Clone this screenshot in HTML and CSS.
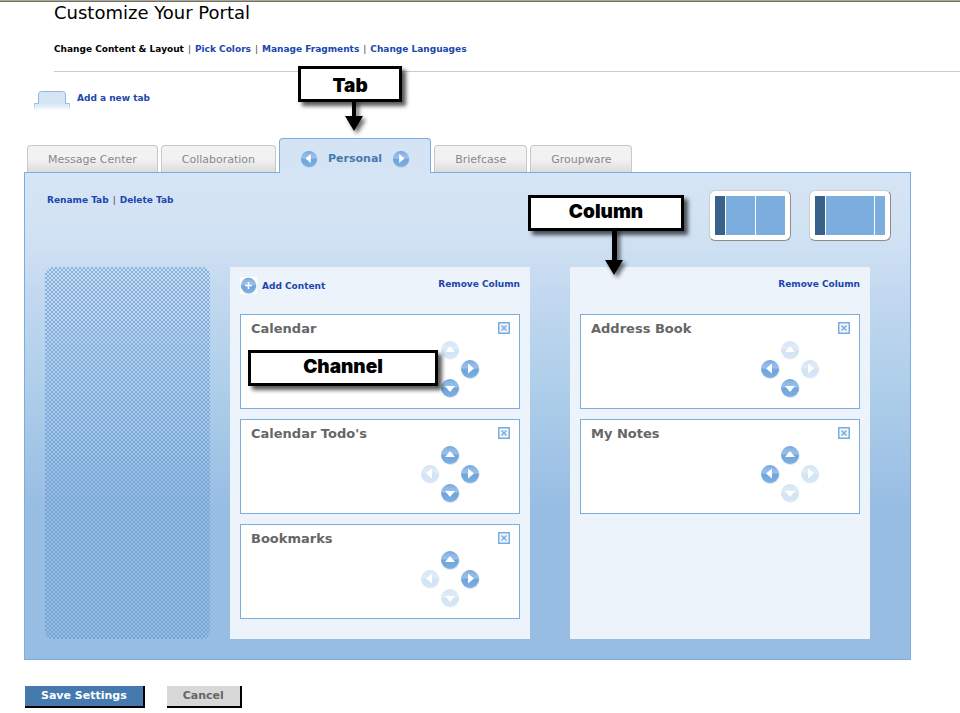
FILE: index.html
```html
<!DOCTYPE html>
<html lang="en">
<head>
<meta charset="utf-8">
<title>Customize Your Portal</title>
<link rel="stylesheet" href="styles.css">
</head>
<body>
<svg class="defs" aria-hidden="true">
  <defs>
    <linearGradient id="ball" x1="0" y1="0" x2="0" y2="1">
      <stop offset="0" stop-color="#6b9fd8"/>
      <stop offset="0.15" stop-color="#8ab5e4"/>
      <stop offset="0.42" stop-color="#98c0ea"/>
      <stop offset="0.54" stop-color="#6fa4dc"/>
      <stop offset="1" stop-color="#7db0e4"/>
    </linearGradient>
    <symbol id="disc" viewBox="0 0 20 20">
      <circle cx="10.5" cy="11" r="9" fill="#c4d4e6" opacity=".7"/>
      <circle cx="10" cy="10" r="9" fill="url(#ball)"/>
    </symbol>
    <symbol id="up" viewBox="0 0 20 20"><use href="#disc"/><path d="M10 6 15 12H5z" fill="#fff"/></symbol>
    <symbol id="down" viewBox="0 0 20 20"><use href="#disc"/><path d="M10 14 5 8h10z" fill="#fff"/></symbol>
    <symbol id="left" viewBox="0 0 20 20"><use href="#disc"/><path d="M6 9.500 12 4.500v10z" fill="#fff"/></symbol>
    <symbol id="right" viewBox="0 0 20 20"><use href="#disc"/><path d="M14 9.500 8 4.500v10z" fill="#fff"/></symbol>
    <symbol id="plus" viewBox="0 0 20 20"><use href="#disc"/><path d="M10 6v8M6 10h8" stroke="#fff" stroke-width="2"/></symbol>
    <symbol id="close" viewBox="0 0 12 12"><path d="M.75.75h10.500v10.500H.75z" fill="#f0f6fd" stroke="#7badde" stroke-width="1.500"/><path d="m3.500 3.500 5 5m0-5-5 5" stroke="#7badde" stroke-width="1.500"/></symbol>
  </defs>
</svg>
<header class="top">
  <h1>Customize Your Portal</h1>
  <nav class="links">
    <span class="current">Change Content &amp; Layout</span>
    <a href="#">Pick Colors</a>
    <a href="#">Manage Fragments</a>
    <a href="#">Change Languages</a>
  </nav>
</header>
<main>
  <a class="add-tab" href="#">
    <svg width="36" height="20" viewBox="0 0 36 20" aria-hidden="true">
      <defs><linearGradient id="fade" x1="0" y1="0" x2="0" y2="1"><stop offset=".6" stop-color="#d5e4f5"/><stop offset="1" stop-color="#fff"/></linearGradient>
      <linearGradient id="fadeline" gradientUnits="userSpaceOnUse" x1="0" y1="12" x2="0" y2="20"><stop offset="0" stop-color="#8fb9e4"/><stop offset="1" stop-color="#fff"/></linearGradient></defs>
      <path d="M0 20v-7h4V4q0-3 3-3h22q3 0 3 3v9h4v7z" fill="url(#fade)"/>
      <path d="M.5 20v-7.500h4V3.500q0-3 3-3h21q3 0 3 3v9h4V20" fill="none" stroke="url(#fadeline)"/>
    </svg>
    Add a new tab
  </a>
  <nav class="tabs" aria-label="Portal tabs">
    <a class="tab" href="#">Message Center</a>
    <a class="tab" href="#">Collaboration</a>
    <div class="tab active">
      <button class="icon" aria-label="Move tab left"><svg><use href="#left"/></svg></button>
      <span>Personal</span>
      <button class="icon" aria-label="Move tab right"><svg><use href="#right"/></svg></button>
      <div class="callout callout-tab">Tab<svg width="20" height="34" viewBox="0 0 20 34"><path d="M8 0h4v17h7L10 32 1 17h7z"/></svg></div>
    </div>
    <a class="tab" href="#">Briefcase</a>
    <a class="tab" href="#">Groupware</a>
  </nav>
  <section class="panel">
    <div class="panel-head">
      <div class="links">
        <a href="#">Rename Tab</a>
        <a href="#">Delete Tab</a>
      </div>
      <div class="layouts">
        <button class="layout even" aria-label="Two even columns"><i></i><i></i><i></i></button>
        <button class="layout wide" aria-label="Wide and narrow columns"><i></i><i></i><i></i></button>
      </div>
    </div>
    <div class="board">
      <aside class="menu-slot"></aside>
      <div class="columns">
        <section class="column">
          <div class="column-head">
            <a class="add" href="#"><svg class="plus"><use href="#plus"/></svg>Add Content</a>
            <a class="remove" href="#">Remove Column</a>
          </div>
          <article class="channel">
            <h2>Calendar</h2>
            <button class="icon close" aria-label="Remove Calendar"><svg><use href="#close"/></svg></button>
            <div class="moves">
              <button class="icon up" disabled aria-label="Move up"><svg><use href="#up"/></svg></button>
              <button class="icon left" disabled aria-label="Move left"><svg><use href="#left"/></svg></button>
              <button class="icon right" aria-label="Move right"><svg><use href="#right"/></svg></button>
              <button class="icon down" aria-label="Move down"><svg><use href="#down"/></svg></button>
            </div>
            <div class="callout callout-channel">Channel</div>
          </article>
          <article class="channel">
            <h2>Calendar Todo's</h2>
            <button class="icon close" aria-label="Remove Calendar Todo's"><svg><use href="#close"/></svg></button>
            <div class="moves">
              <button class="icon up" aria-label="Move up"><svg><use href="#up"/></svg></button>
              <button class="icon left" disabled aria-label="Move left"><svg><use href="#left"/></svg></button>
              <button class="icon right" aria-label="Move right"><svg><use href="#right"/></svg></button>
              <button class="icon down" aria-label="Move down"><svg><use href="#down"/></svg></button>
            </div>
          </article>
          <article class="channel">
            <h2>Bookmarks</h2>
            <button class="icon close" aria-label="Remove Bookmarks"><svg><use href="#close"/></svg></button>
            <div class="moves">
              <button class="icon up" aria-label="Move up"><svg><use href="#up"/></svg></button>
              <button class="icon left" disabled aria-label="Move left"><svg><use href="#left"/></svg></button>
              <button class="icon right" aria-label="Move right"><svg><use href="#right"/></svg></button>
              <button class="icon down" disabled aria-label="Move down"><svg><use href="#down"/></svg></button>
            </div>
          </article>
        </section>
        <section class="column">
          <div class="column-head">
            <a class="remove" href="#">Remove Column</a>
          </div>
          <article class="channel">
            <h2>Address Book</h2>
            <button class="icon close" aria-label="Remove Address Book"><svg><use href="#close"/></svg></button>
            <div class="moves">
              <button class="icon up" disabled aria-label="Move up"><svg><use href="#up"/></svg></button>
              <button class="icon left" aria-label="Move left"><svg><use href="#left"/></svg></button>
              <button class="icon right" disabled aria-label="Move right"><svg><use href="#right"/></svg></button>
              <button class="icon down" aria-label="Move down"><svg><use href="#down"/></svg></button>
            </div>
          </article>
          <article class="channel">
            <h2>My Notes</h2>
            <button class="icon close" aria-label="Remove My Notes"><svg><use href="#close"/></svg></button>
            <div class="moves">
              <button class="icon up" aria-label="Move up"><svg><use href="#up"/></svg></button>
              <button class="icon left" aria-label="Move left"><svg><use href="#left"/></svg></button>
              <button class="icon right" disabled aria-label="Move right"><svg><use href="#right"/></svg></button>
              <button class="icon down" disabled aria-label="Move down"><svg><use href="#down"/></svg></button>
            </div>
          </article>
          <div class="callout callout-column">Column<svg width="20" height="48" viewBox="0 0 20 48"><path d="M8 0h5v32h6L10 47 1 32h7z"/></svg></div>
        </section>
      </div>
    </div>
  </section>
  <div class="actions">
    <button class="save">Save Settings</button>
    <button class="cancel">Cancel</button>
  </div>
</main>
</body>
</html>
```
FILE: styles.css
```css
* { box-sizing: border-box; }
body {
  margin: 0;
  background: #fff;
  color: #000;
  font: 11px/14px Verdana, "DejaVu Sans", sans-serif;
  border-top: 1px solid #aca899;
}
.defs { position: absolute; width: 0; height: 0; }
a { color: #2046ad; text-decoration: none; }
button { font: inherit; cursor: pointer; }

.top {
  border-top: 1px solid #716f64;
}
h1 {
  margin: 0 0 0 54px;
  font-size: 18px;
  line-height: 22px;
  font-weight: normal;
}
.links {
  display: flex;
  font-size: 9px;
  line-height: 14px;
  font-weight: bold;
}
.links > * + * {
  margin-left: 4px;
}
.links > * + *::before {
  content: "|";
  margin-right: 4px;
  font-weight: normal;
  color: #444;
}
.top .links {
  margin-left: 54px;
  padding: 18px 0 15px;
  border-bottom: 1px solid #ccc;
}

main { margin: 0 49px 0 24px; }
.add-tab {
  display: flex;
  gap: 7px;
  margin: 19px 0 0 10px;
  height: 20px;
  width: max-content;
  font-size: 9px;
  font-weight: bold;
}

.tabs {
  display: flex;
  align-items: flex-end;
  gap: 3px;
  margin: 27px 0 0 3px;
}
.tab {
  height: 27px;
  padding: 0 20px;
  border: 1px solid #c8c8c8;
  border-bottom: 0;
  border-radius: 4px 4px 0 0;
  background: linear-gradient(#f2f2f2 50%, #dcdcdc);
  color: #888;
  line-height: 27px;
}
.tab.active {
  position: relative;
  display: flex;
  align-items: center;
  gap: 10px;
  height: 35px;
  margin-bottom: -1px;
  padding: 5px 20px 0;
  border-color: #7badde;
  background: #d5e4f5;
  color: #457aaf;
  font-weight: bold;
}
.icon {
  display: block;
  width: 18px;
  height: 18px;
  padding: 0;
  border: 0;
  background: none;
}
.icon svg, .plus { display: block; width: 100%; height: 100%; }

.panel {
  padding: 17px 40px 20px 20px;
  border: 1px solid #7badde;
  background: linear-gradient(#d6e5f5, #d1e2f3 60px, #c3d8f0 120px, #afcfea 210px, #98bde3 335px);
}
.panel-head {
  display: flex;
  justify-content: space-between;
  margin: 0 -21px 26px 2px;
}
.panel-head .links { padding-top: 3px; }
.layouts { display: flex; gap: 18px; }
.layout {
  display: grid;
  gap: 1px;
  width: 82px;
  height: 51px;
  padding: 5px;
  border: 1px solid #8c8c8c;
  border-top-color: #ccc;
  border-left-color: #ccc;
  border-radius: 6px;
  background: #fff;
}
.layout i { background: #7badde; }
.layout i:first-child { background: #39628b; }
.even { grid-template-columns: 10px 1fr 1fr; }
.wide { grid-template-columns: 10px 1fr 10px; }

.board { display: flex; gap: 20px; }
.menu-slot {
  flex: 0 0 165px;
  border-radius: 8px;
  background: repeating-conic-gradient(rgb(92 148 207 / 60%) 0 25%, transparent 0 50%) 0 0 / 4px 4px;
}
.columns {
  flex: 1;
  display: grid;
  grid-template-columns: 1fr 1fr;
  gap: 40px;
}
.column {
  position: relative;
  display: flex;
  flex-direction: column;
  gap: 10px;
  padding: 10px 10px 20px;
  background: #edf3fb;
}
.column-head {
  display: flex;
  align-items: flex-start;
  height: 27px;
  font-size: 9px;
  font-weight: bold;
}
.add { display: flex; align-items: center; gap: 5px; }
.plus { width: 17px; height: 17px; background: #fff; }
.remove { margin-left: auto; }
.channel {
  position: relative;
  display: grid;
  grid-template-columns: 1fr 12px;
  align-content: start;
  align-items: start;
  height: 95px;
  padding: 6px 9px 4px 10px;
  border: 1px solid #7badde;
  background: #fff;
}
h2 {
  margin: 0;
  font-size: 13px;
  line-height: 16px;
  font-weight: bold;
  color: #666;
}
.close { width: 12px; height: 12px; margin-top: 1px; }
.moves {
  grid-column: 1 / -1;
  justify-self: end;
  display: grid;
  grid-template: repeat(3, 19px) / repeat(3, 20px);
  place-items: center;
  margin: 3px 30px 0 0;
}
.moves .icon { width: 20px; height: 20px; }
.moves .icon:disabled { opacity: .3; }
.up { grid-area: 1 / 2; }
.left { grid-area: 2 / 1; }
.right { grid-area: 2 / 3; }
.down { grid-area: 3 / 2; }

.callout {
  position: absolute;
  z-index: 1;
  height: 36px;
  border: 3px solid #000;
  background: #fff;
  box-shadow: 4px 4px 4px rgb(0 0 0 / 65%);
  color: #000;
  font: 900 19px/28px "Arial Black", Inter, sans-serif;
  text-align: center;
}
.callout svg {
  position: absolute;
  top: 100%;
  left: 50%;
  filter: drop-shadow(3px 3px 2px rgb(0 0 0 / 60%));
}
.callout-tab { left: 18px; top: -73px; width: 104px; line-height: 34px; }
.callout-tab svg { margin-left: -6px; }
.callout-column { left: -42px; top: -72px; width: 156px; }
.callout-column svg { margin-left: -2px; }
.callout-channel { left: 7px; top: 35px; width: 190px; }

.actions { display: flex; gap: 22px; margin: 26px 0 0 1px; }
.actions button {
  height: 22px;
  padding: 0 16px;
  border: solid #000;
  border-width: 0 2px 2px 0;
  font-weight: bold;
}
.save { background: #457aaf; color: #fff; }
.cancel { background: #d8d8d8; color: #666; }
```
